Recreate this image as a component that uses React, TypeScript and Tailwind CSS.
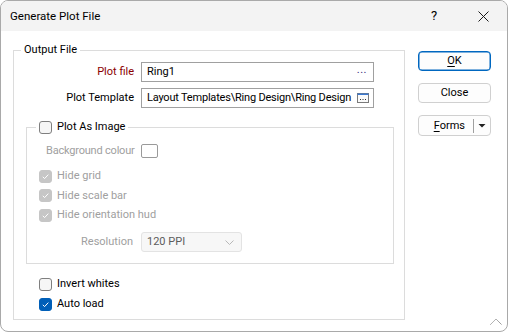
import React from "react";

function Check({ checked, disabled }: { checked?: boolean; disabled?: boolean }) {
  let cls = "border border-[#7f7f7f] bg-[#f6f6f6]";
  if (checked && !disabled) cls = "bg-[#005fb8] border border-[#005fb8]";
  if (checked && disabled) cls = "bg-[#c6c6c6] border border-[#c6c6c6]";
  return (
    <span className={`inline-flex w-[13px] h-[13px] shrink-0 rounded-[3px] items-center justify-center ${cls}`}>
      {checked && (
        <svg width="11" height="11" viewBox="0 0 11 11">
          <polyline points="2.8,5.8 4.6,7.6 8.3,3.6" fill="none" stroke="#ffffff" strokeWidth="1" />
        </svg>
      )}
    </span>
  );
}

export default function App() {
  return (
    <div className="w-[508px] h-[333px] bg-white">
      <div className="w-[508px] h-[332px] border border-[#a9a9a9] rounded-[8px] overflow-hidden flex flex-col bg-white relative font-['Roboto','Noto_Sans',sans-serif] text-[11px] leading-[16px] text-black">
        {/* Title bar */}
        <div className="h-[30px] bg-[#f3f3f3] flex items-center pl-[9px] shrink-0">
          <span className="flex-1 text-[11.5px]">Generate Plot File</span>
          <span className="w-[14px] text-center text-[13px] mr-[37px]">?</span>
          <svg width="11" height="11" viewBox="0 0 11 11" className="mr-[18px]">
            <path d="M0.5 0.5 L10.5 10.5 M10.5 0.5 L0.5 10.5" stroke="#1a1a1a" strokeWidth="1" />
          </svg>
        </div>

        {/* Body */}
        <div className="flex-1 flex pt-[11px] pl-[12px]">
          <fieldset className="w-[392px] border border-[#dcdcdc] pb-[5px] m-0 p-0 self-start">
            <legend className="ml-[7px] px-[3px] h-[16px]">Output File</legend>

            <div className="grid grid-cols-[120px_233px] gap-x-[7px] gap-y-[6px] mt-[4px] items-center">
              <span className="text-right text-[#8b0000]">Plot file</span>
              <div className="h-[20px] border border-[#a0a0a0] flex items-center pl-[5px] pr-[6px] bg-white">
                <span className="flex-1">Ring1</span>
                <span className="text-[#3a2a7a] tracking-[0.5px] leading-[10px] -mt-[4px]">...</span>
              </div>
              <span className="text-right">Plot Template</span>
              <div className="h-[20px] border border-[#a0a0a0] flex items-center pl-[5px] pr-[4px] bg-white">
                <span className="flex-1 whitespace-nowrap overflow-hidden tracking-[-0.2px]">Layout Templates\Ring Design\Ring Design</span>
                <svg width="12" height="10" viewBox="0 0 12 10" className="shrink-0 ml-[2px]">
                  <rect x="0.5" y="0.5" width="11" height="9" fill="#fafafa" stroke="#7a7a7a" />
                  <rect x="0.5" y="0.5" width="11" height="1.5" fill="#3b78d0" />
                  <rect x="3" y="6" width="1" height="1" fill="#333" />
                  <rect x="5.5" y="6" width="1" height="1" fill="#333" />
                  <rect x="8" y="6" width="1" height="1" fill="#333" />
                </svg>
              </div>
            </div>

            {/* Plot As Image */}
            <fieldset className="ml-[12px] mr-[10px] mt-[11px] border border-[#dcdcdc] pb-[11px] p-0">
              <legend className="ml-[9px] px-[3px] h-[16px] flex items-center gap-[5px]">
                <Check />
                <span>Plot As Image</span>
              </legend>
              <div className="flex items-center h-[14px] mt-[9px] pl-[19px] text-[#a0a0a0]">
                <span className="w-[95px] whitespace-nowrap tracking-[-0.2px]">Background colour</span>
                <span className="w-[17px] h-[14px] border border-[#9a9a9a] rounded-[2px] bg-white" />
              </div>
              <div className="mt-[8px] pl-[12px] text-[#a0a0a0]">
                <div className="h-[20px] flex items-center gap-[5px]"><Check checked disabled /><span>Hide grid</span></div>
                <div className="h-[19px] flex items-center gap-[5px]"><Check checked disabled /><span>Hide scale bar</span></div>
                <div className="h-[20px] flex items-center gap-[5px]"><Check checked disabled /><span>Hide orientation hud</span></div>
              </div>
              <div className="mt-[7px] flex items-center">
                <span className="w-[106px] text-right text-[#a0a0a0]">Resolution</span>
                <div className="ml-[8px] w-[101px] h-[20px] border border-[#e3e3e3] rounded-[3px] bg-[#f7f7f7] flex items-center pl-[5px] pr-[7px]">
                  <span className="flex-1 text-[#5c5c5c]">120 PPI</span>
                  <svg width="9" height="5" viewBox="0 0 9 5">
                    <polyline points="0.5,0.5 4.5,4.5 8.5,0.5" fill="none" stroke="#b8b8b8" strokeWidth="1" />
                  </svg>
                </div>
              </div>
            </fieldset>

            <div className="mt-[10px] pl-[25px]">
              <div className="h-[20px] flex items-center gap-[5px]"><Check /><span>Invert whites</span></div>
              <div className="h-[20px] flex items-center gap-[5px]"><Check checked /><span>Auto load</span></div>
            </div>
          </fieldset>

          {/* Buttons */}
          <div className="ml-[13px] mt-[9px] flex flex-col gap-[12px] w-[73px]">
            <div className="h-[20px] rounded-[4px] border border-[#0067c0] bg-[#fdfdfd] flex items-center justify-center shadow-[inset_0_0_0_0.5px_#0067c0]">
              <span><span className="underline underline-offset-[2px]">O</span>K</span>
            </div>
            <div className="h-[20px] rounded-[4px] border border-[#d0d0d0] bg-[#fdfdfd] flex items-center justify-center">
              Close
            </div>
            <div className="h-[21px] rounded-[4px] border border-[#d0d0d0] bg-[#fdfdfd] flex items-center">
              <span className="flex-1 text-right pr-[8px]"><span className="underline underline-offset-[2px]">F</span>orms</span>
              <span className="w-px h-[14px] bg-[#a0a0a0]" />
              <svg width="16" height="8" viewBox="0 0 16 8">
                <polygon points="4.5,2 11.5,2 8,5.5" fill="#222" />
              </svg>
            </div>
          </div>
        </div>

        <svg width="12" height="7" viewBox="0 0 12 7" className="absolute right-[5px] bottom-[6px]">
          <polyline points="0.5,6.5 6,1 11.5,6.5" fill="none" stroke="#777" strokeWidth="1" strokeDasharray="1 0.5" />
        </svg>
      </div>
    </div>
  );
}
